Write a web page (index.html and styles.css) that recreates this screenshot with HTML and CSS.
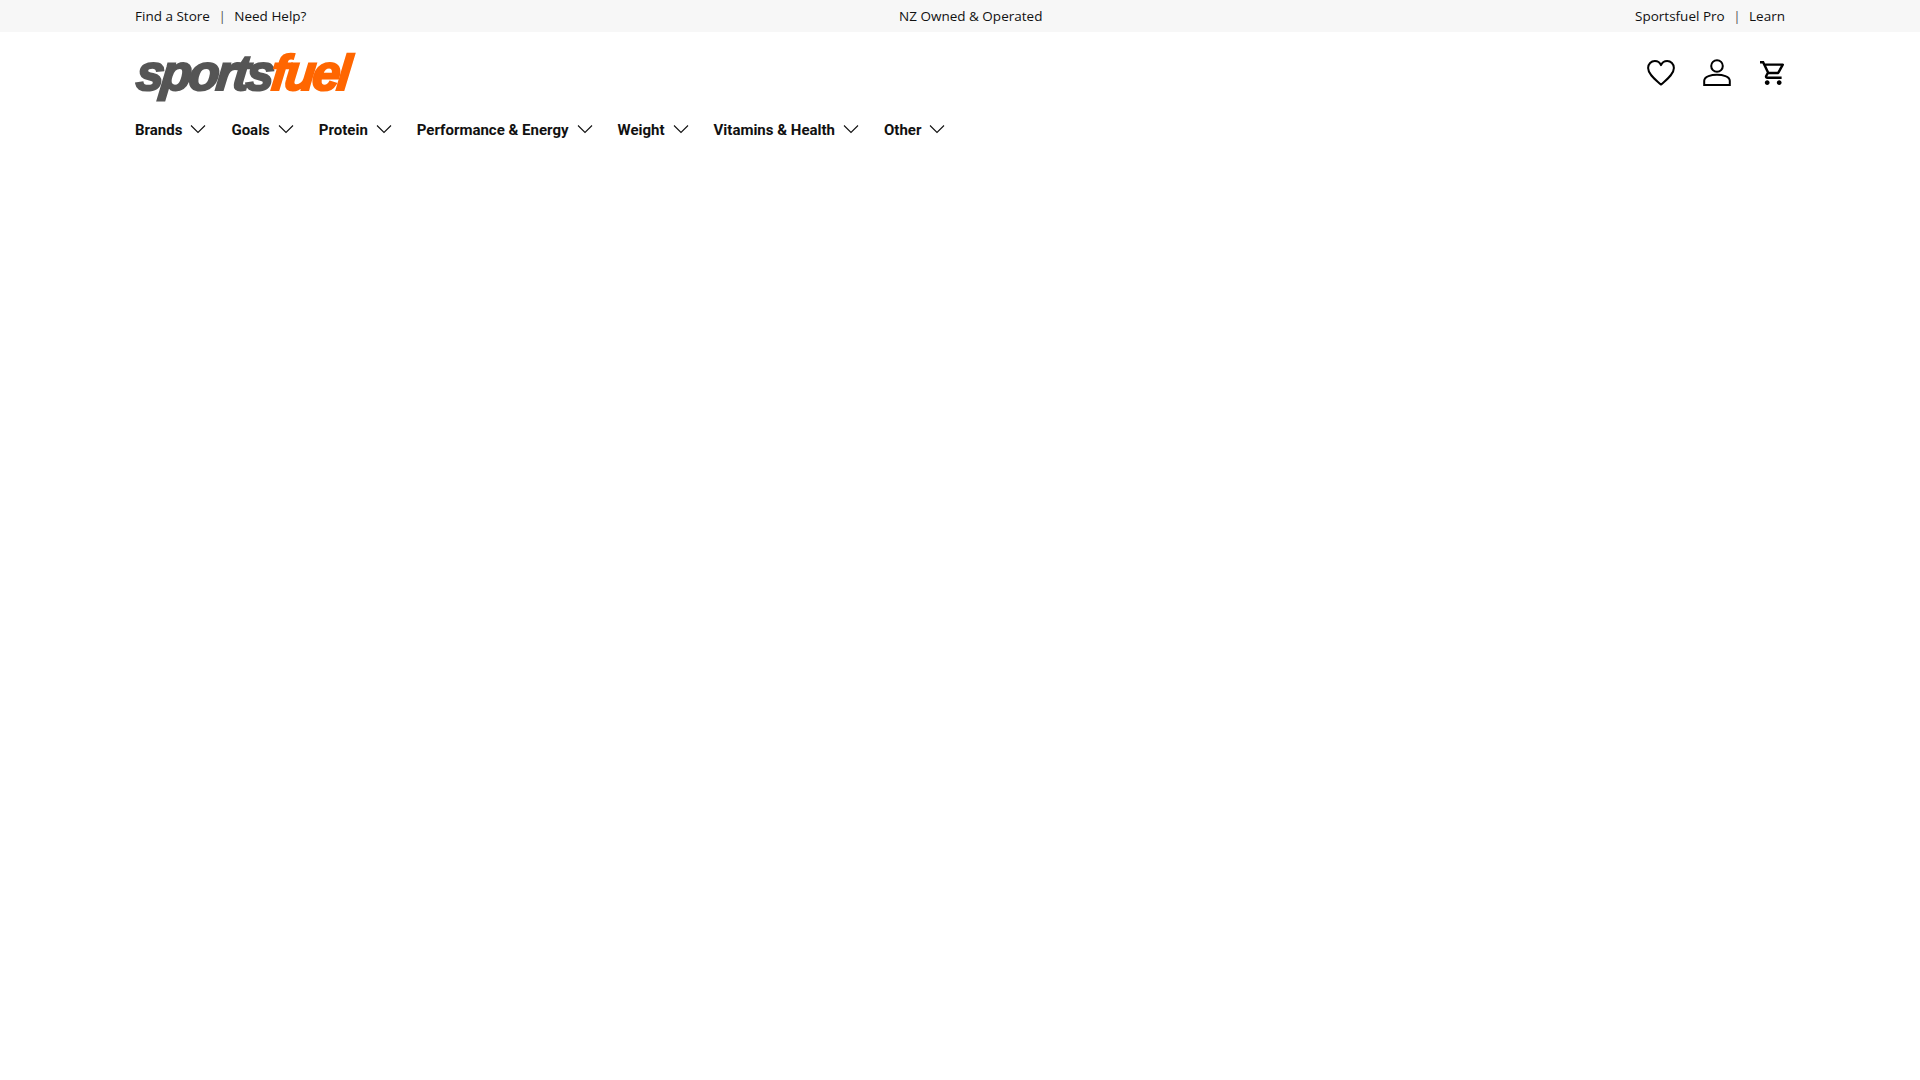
FILE: index.html
```html
<!DOCTYPE html>
<html lang="en">
<head>
<meta charset="utf-8">
<title>Sportsfuel</title>
<link rel="stylesheet" href="styles.css">
</head>
<body>
<div class="topbar">
  <div class="wrap topbar-row">
    <div class="links"><a>Find a Store</a><span class="sep">|</span><a>Need Help?</a></div>
    <div>NZ Owned &amp; Operated</div>
    <div class="links"><a>Sportsfuel Pro</a><span class="sep">|</span><a>Learn</a></div>
  </div>
</div>
<header class="wrap">
  <div class="main-row">
    <a class="logo"><span class="logo-a">sports</span><span class="logo-b">fuel</span></a>
    <div class="icons">
      <svg class="ico-heart" viewBox="0 0 28 26" fill="none" stroke="#000" stroke-width="2" stroke-linejoin="round"><path d="M14 24.600C9 20 1.100 14.500 1.100 8C1.100 4 4.200 1.100 7.800 1.100C10.500 1.100 13 2.800 14 5.200C15 2.800 17.500 1.100 20.200 1.100C23.800 1.100 26.900 4 26.900 8C26.900 14.500 19 20 14 24.600Z"/></svg>
      <svg class="ico-user" viewBox="0 0 28 27" fill="none" stroke="#000" stroke-width="2"><circle cx="14" cy="7" r="5.800"/><path d="M1.200 26V21.800C1.200 17.300 8.500 15.700 14 15.700S26.800 17.300 26.800 21.800V26Z"/></svg>
      <svg class="ico-cart" viewBox="1 2 20 20"><path d="M15.550 13c.75 0 1.410-.41 1.750-1.030l3.580-6.490A.996.996 0 0 0 20.010 4H5.210l-.94-2H1v2h2l3.600 7.590-1.350 2.440C4.520 15.370 5.480 17 7 17h12v-2H7l1.100-2h7.450zM6.160 6h12.150l-2.760 5H8.530L6.160 6zM7 18c-1.100 0-1.990.9-1.990 2S5.900 22 7 22s2-.9 2-2-.9-2-2-2zm10 0c-1.100 0-1.990.9-1.990 2s.89 2 1.990 2 2-.9 2-2-.9-2-2-2z"/></svg>
    </div>
  </div>
  <nav class="nav">
    <a class="nav-item">Brands<svg class="chev" viewBox="0 0 16 10"><path d="M1 1.500 8 8.500l7-7"/></svg></a>
    <a class="nav-item">Goals<svg class="chev" viewBox="0 0 16 10"><path d="M1 1.500 8 8.500l7-7"/></svg></a>
    <a class="nav-item">Protein<svg class="chev" viewBox="0 0 16 10"><path d="M1 1.500 8 8.500l7-7"/></svg></a>
    <a class="nav-item">Performance &amp; Energy<svg class="chev" viewBox="0 0 16 10"><path d="M1 1.500 8 8.500l7-7"/></svg></a>
    <a class="nav-item">Weight<svg class="chev" viewBox="0 0 16 10"><path d="M1 1.500 8 8.500l7-7"/></svg></a>
    <a class="nav-item">Vitamins &amp; Health<svg class="chev" viewBox="0 0 16 10"><path d="M1 1.500 8 8.500l7-7"/></svg></a>
    <a class="nav-item">Other<svg class="chev" viewBox="0 0 16 10"><path d="M1 1.500 8 8.500l7-7"/></svg></a>
  </nav>
</header>
</body>
</html>
```
FILE: styles.css
```css
* { box-sizing: border-box; }
html, body { margin: 0; height: 100%; background: #fff; }
body { font-family: "Open Sans", sans-serif; color: #111; }
.wrap { padding: 0 135px; }
.topbar { height: 32px; background: #f7f7f7; font-size: 13.500px; line-height: 32px; }
.topbar-row { display: flex; justify-content: space-between; }
.links { display: flex; }
.sep { margin: 0 8.500px; color: #555; }
.main-row { height: 83px; display: flex; justify-content: space-between; align-items: center; }
.logo { display: block; height: 50px; margin-bottom: 2px; font-family: "Liberation Sans", sans-serif; font-weight: 700; font-style: italic; font-size: 50px; line-height: 50px; letter-spacing: -3px; white-space: nowrap; transform: skewX(-6deg); transform-origin: 0 85%; }
.logo-a { color: #555; -webkit-text-stroke: 2.200px #555; }
.logo-b { color: #ff6600; -webkit-text-stroke: 2.200px #ff6600; }
.icons { display: flex; align-items: center; margin-bottom: 2px; }
.ico-heart { width: 28px; height: 26px; display: block; margin-right: 28px; }
.ico-user { width: 28px; height: 27px; display: block; margin-right: 29px; }
.ico-cart { width: 24px; height: 24px; display: block; margin-right: 1px; }
.nav { display: flex; gap: 25px; height: 30px; align-items: center; font-family: Roboto, sans-serif; font-weight: 700; font-size: 15px; color: #111; }
.nav-item { display: flex; align-items: center; gap: 8px; }
.chev { width: 16px; height: 10px; margin-bottom: 2px; fill: none; stroke: #111; stroke-width: 1.100; }
```
